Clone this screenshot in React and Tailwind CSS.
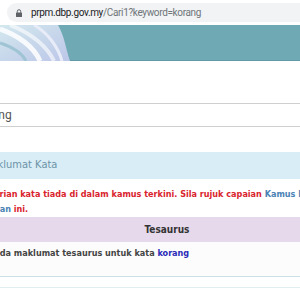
import React from 'react';

const Swirl = () => (
    <svg width="70" height="36" viewBox="0 0 70 36" className="block">
        <defs>
            <linearGradient id="sw" x1="0" y1="0" x2="1" y2="1">
                <stop offset="0" stopColor="#d3e8ee" />
                <stop offset="1" stopColor="#bcc6e8" />
            </linearGradient>
        </defs>
        <rect width="70" height="36" fill="url(#sw)" />
        <path d="M0 4 C18 10 34 22 40 36" stroke="#ffffff" strokeOpacity="0.85" strokeWidth="5" fill="none" />
        <path d="M10 0 C30 8 46 20 54 36" stroke="#ffffff" strokeOpacity="0.6" strokeWidth="4" fill="none" />
        <path d="M0 18 C12 22 22 28 26 36" stroke="#9fc4d4" strokeWidth="3" fill="none" />
        <path d="M34 0 C48 8 58 22 62 36" stroke="#e8ecf8" strokeWidth="3" fill="none" />
        <path d="M58 0 C64 10 66 24 70 36 L70 0 Z" fill="#6fa9b4" />
    </svg>
);

const App = () => {
    const page = { fontFamily: '"DejaVu Sans Condensed", "DejaVu Sans", sans-serif' };
    const chrome = { fontFamily: 'Roboto, "Noto Sans", sans-serif' };

    return (
        <div className="w-[300px] h-[300px] overflow-hidden bg-white">
            {/* address bar */}
            <div className="h-[25px] bg-white pt-[3px] pl-[7px]">
                <div className="h-[19px] bg-[#f1f3f4] rounded-l-full flex items-center pl-[9px] gap-[9px]" style={chrome}>
                    <svg width="6" height="8" viewBox="0 0 6 8">
                        <rect x="0" y="3.5" width="6" height="4.5" rx="0.6" fill="#5f6368" />
                        <path d="M1.3 3.8 V2.4 a1.7 1.7 0 0 1 3.4 0 V3.8" stroke="#5f6368" strokeWidth="1" fill="none" />
                    </svg>
                    <span className="text-[10px] whitespace-nowrap tracking-[-0.35px]">
                        <span className="text-[#202124]">prpm.dbp.gov.my</span>
                        <span className="text-[#70757a]">/Cari1?keyword=korang</span>
                    </span>
                </div>
            </div>

            {/* banner */}
            <div className="h-[36px] bg-[#6fa9b4] border-b border-[#5f9aa6] flex">
                <Swirl />
            </div>

            <div style={page}>
                {/* search box */}
                <div className="mt-[42px] h-[24px] border-y border-[#cfcfcf] flex items-center overflow-hidden">
                    <span className="ml-[-25px] text-[12px] text-[#555]" style={chrome}>korang</span>
                </div>

                {/* maklumat kata header */}
                <div className="mt-[25px] h-[27px] bg-[#d9edf7] flex items-center overflow-hidden">
                    <span className="ml-[-17px] text-[11px] text-[#6b93a6] whitespace-nowrap">Maklumat Kata</span>
                </div>

                {/* notice */}
                <div className="mt-[8px] text-[9px] font-bold text-[#d9232d] leading-[15px] whitespace-nowrap overflow-hidden">
                    <div className="ml-[-12px]">
                        Carian kata tiada di dalam kamus terkini. Sila rujuk capaian <span className="text-[#4a82b4]">Kamus Dewan</span>
                    </div>
                    <div className="ml-[-20px]">
                        <span className="text-[#4a82b4]">Dewan</span> ini.
                    </div>
                </div>

                {/* tesaurus */}
                <div className="h-[25px] bg-[#e6d9eb] flex items-center justify-center pl-[34px]">
                    <span className="text-[10px] font-bold text-[#333]">Tesaurus</span>
                </div>
                <div className="h-[35px] bg-[#fcfcfc] border-b border-[#c9e0e4] pt-[5px] overflow-hidden whitespace-nowrap">
                    <div className="ml-[-14px] text-[9px] leading-[12px] font-bold text-[#444]">
                        Tiada maklumat tesaurus untuk kata <span className="text-[#2b2bb8]">korang</span>
                    </div>
                </div>
                <div className="h-[11px] border-b border-[#e0eef0]" />
            </div>
        </div>
    );
};

export default App;
